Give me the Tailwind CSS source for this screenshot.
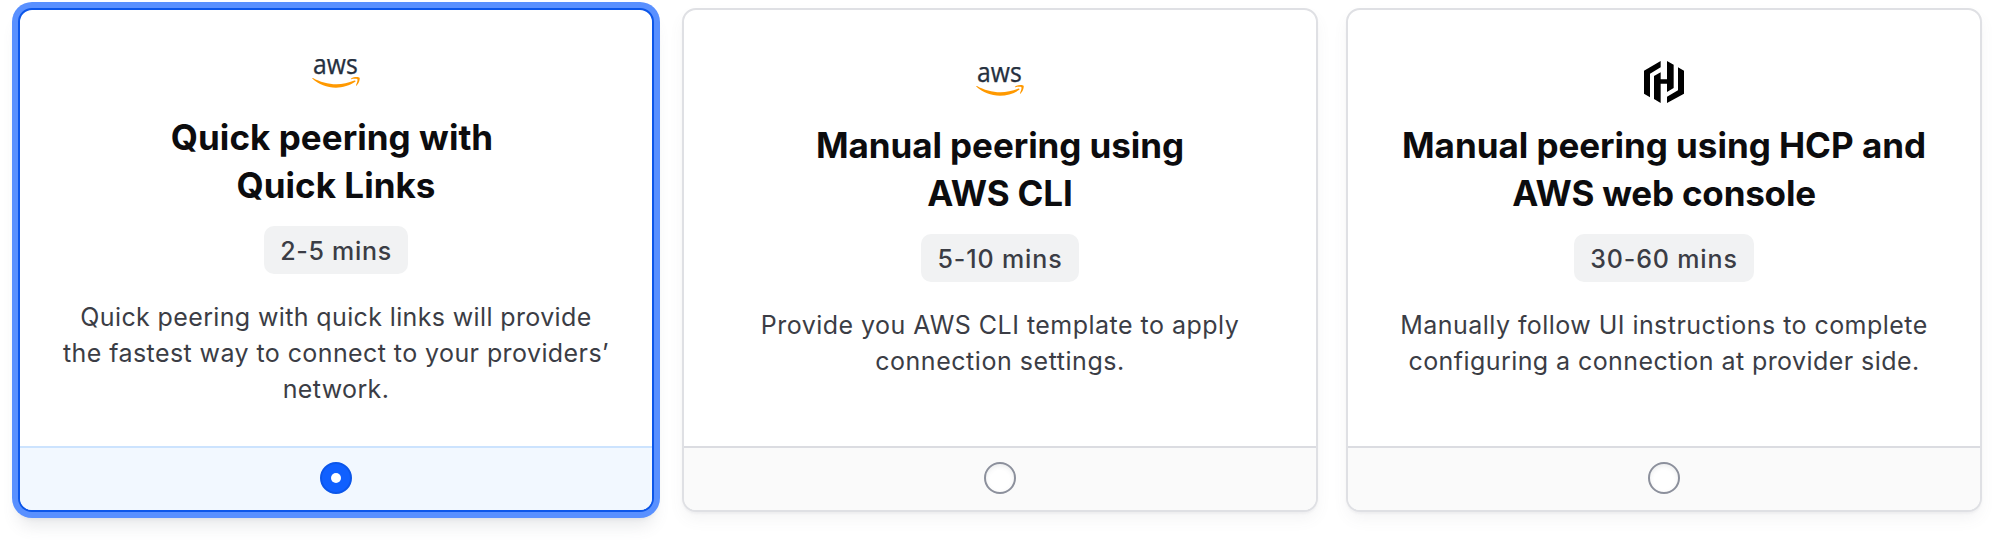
<!DOCTYPE html>
<html lang="en">
<head>
<meta charset="utf-8">
<title>Peering options</title>
<script src="https://cdn.jsdelivr.net/npm/@tailwindcss/browser@4"></script>
</head>
<body class="bg-white font-['Inter',sans-serif] text-[#3b3d45]">
<svg class="hidden">
  <symbol id="aws" viewBox="0 0 304 182">
    <text x="7" y="93" font-family="Open Sans, Noto Sans, sans-serif" font-weight="500" font-size="171" textLength="283" lengthAdjust="spacingAndGlyphs" fill="#252f3e" stroke="#252f3e" stroke-width="2">aws</text>
    <path fill="#f90" d="M273.5,143.7c-32.9,24.3-80.7,37.2-121.8,37.2c-57.6,0-109.5-21.3-148.7-56.7c-3.1-2.8-0.3-6.6,3.4-4.4c42.4,24.6,94.7,39.5,148.8,39.5c36.5,0,76.6-7.6,113.5-23.2C274.2,133.6,278.9,139.7,273.5,143.7z"/>
    <path fill="#f90" d="M287.2,128.1c-4.2-5.4-27.8-2.6-38.5-1.3c-3.2,0.4-3.7-2.4-0.8-4.5c18.8-13.2,49.7-9.4,53.3-5c3.6,4.5-1,35.4-18.6,50.2c-2.7,2.3-5.3,1.1-4.1-1.9C282.5,155.7,291.4,133.4,287.2,128.1z"/>
  </symbol>
</svg>
<main class="flex min-h-screen items-start gap-7 pl-[18px] pt-2">
  <label class="flex h-[504px] w-[636px] flex-col overflow-hidden rounded-[14px] border-2 border-[#0c56e9] bg-white text-center shadow-[0_0_0_6px_#5990ff,0_4px_4px_3px_rgba(101,106,118,0.10),0_14px_16px_0px_rgba(101,106,118,0.14)]">
    <div class="flex flex-1 flex-col items-center pt-[49px]">
      <svg class="h-[29px] w-12 overflow-visible"><use href="#aws"/></svg>
      <h2 class="mt-[25px] text-[35px] font-[660] leading-[48px] text-[#0c0c0e]"><span class="block pr-2 tracking-[0.05px]">Quick peering with</span><span class="block tracking-[0.02px]">Quick Links</span></h2>
      <div class="mt-[17px] h-12 w-36 rounded-[10px] bg-[#f1f2f3] pt-px text-[25px] font-[450] leading-[48px] tracking-[0.7px]">2-5 mins</div>
      <p class="mt-[25px] text-[25px] leading-9"><span class="block tracking-[0.369px]">Quick peering with quick links will provide</span><span class="block tracking-[0.414px]">the fastest way to connect to your providers’</span><span class="block tracking-[0.37px]">network.</span></p>
    </div>
    <div class="flex h-16 justify-center border-t-2 border-[#cce3fe] bg-[#f2f8ff] pt-3.5">
      <span class="flex size-8 items-center justify-center rounded-full border-2 border-[#0c56e9] bg-[#1060ff]"><span class="size-2.5 rounded-full bg-white"></span></span>
    </div>
  </label>
  <label class="flex h-[504px] w-[636px] flex-col overflow-hidden rounded-[14px] border-2 border-[#dfe0e4] bg-white text-center shadow-[0_2px_2px_0_rgba(101,106,118,0.05),0_8px_16px_-2px_rgba(101,106,118,0.08)]">
    <div class="flex flex-1 flex-col items-center pt-[57px]">
      <svg class="h-[29px] w-12 overflow-visible"><use href="#aws"/></svg>
      <h2 class="mt-[25px] text-[35px] font-[660] leading-[48px] text-[#0c0c0e]"><span class="block tracking-[-0.06px]">Manual peering using</span><span class="block tracking-[-0.15px]">AWS CLI</span></h2>
      <div class="mt-[17px] h-12 w-[158px] rounded-[10px] bg-[#f1f2f3] pt-px text-[25px] font-[450] leading-[48px] tracking-[0.87px]">5-10 mins</div>
      <p class="mt-[25px] text-[25px] leading-9"><span class="block tracking-[0.481px]">Provide you AWS CLI template to apply</span><span class="block tracking-[0.54px]">connection settings.</span></p>
    </div>
    <div class="flex h-16 justify-center border-t-2 border-[#dbdce1] bg-[#fafafa] pt-3.5">
      <span class="size-8 rounded-full border-2 border-[#8c909c] bg-white shadow-[inset_0_2px_4px_rgba(101,106,118,0.12)]"></span>
    </div>
  </label>
  <label class="flex h-[504px] w-[636px] flex-col overflow-hidden rounded-[14px] border-2 border-[#dfe0e4] bg-white text-center shadow-[0_2px_2px_0_rgba(101,106,118,0.05),0_8px_16px_-2px_rgba(101,106,118,0.08)]">
    <div class="flex flex-1 flex-col items-center pt-[51px]">
      <svg class="h-[42px] w-10" viewBox="42 33 120 126" preserveAspectRatio="none"><path d="M92 33 42 62v69l18 11V71l32-19zM111 33v55H92V67L72 78v69l20 12v-58h19v25l20-12V44zM144 52v69l-33 19v19l51-28V62z"/></svg>
      <h2 class="mt-[18px] text-[35px] font-[660] leading-[48px] text-[#0c0c0e]"><span class="block tracking-[-0.03px]">Manual peering using HCP and</span><span class="block tracking-[-0.2px]">AWS web console</span></h2>
      <div class="mt-[17px] h-12 w-[180px] rounded-[10px] bg-[#f1f2f3] pt-px text-[25px] font-[450] leading-[48px] tracking-[0.85px]">30-60 mins</div>
      <p class="mt-[25px] text-[25px] leading-9"><span class="block tracking-[0.45px]">Manually follow UI instructions to complete</span><span class="block tracking-[0.43px]">configuring a connection at provider side.</span></p>
    </div>
    <div class="flex h-16 justify-center border-t-2 border-[#dbdce1] bg-[#fafafa] pt-3.5">
      <span class="size-8 rounded-full border-2 border-[#8c909c] bg-white shadow-[inset_0_2px_4px_rgba(101,106,118,0.12)]"></span>
    </div>
  </label>
</main>
</body>
</html>
